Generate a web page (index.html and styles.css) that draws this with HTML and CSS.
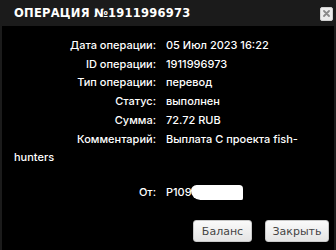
FILE: index.html
```html
<!DOCTYPE html>
<html>
<head>
<meta charset="utf-8">
<link rel="stylesheet" href="styles.css">
</head>
<body>
<div class="dialog">
  <div class="titlebar">
    <span class="title">ОПЕРАЦИЯ №1911996973</span>
    <button class="close" aria-label="close">
      <svg width="7" height="7" viewBox="0 0 7 7"><path d="M1 1L6 6M6 1L1 6" stroke="#8a8a8a" stroke-width="1.8" stroke-linecap="round"/></svg>
    </button>
  </div>
  <div class="content">
    <div class="info">
      <div class="row"><span class="label">Дата операции:</span>05 Июл 2023 16:22</div>
      <div class="row"><span class="label">ID операции:</span>1911996973</div>
      <div class="row"><span class="label">Тип операции:</span>перевод</div>
      <div class="row"><span class="label">Статус:</span>выполнен</div>
      <div class="row"><span class="label">Сумма:</span>72.72 RUB</div>
      <div class="row"><span class="label">Комментарий:</span>Выплата С проекта fish-hunters</div>
      <div class="row from"><span class="label">От:</span>P109<span class="redact"></span></div>
    </div>
    <div class="actions">
      <button class="btn btn-balance">Баланс</button>
      <button class="btn btn-close">Закрыть</button>
    </div>
  </div>
</div>
</body>
</html>
```
FILE: styles.css
```css
* { box-sizing: border-box; }
html, body { margin: 0; padding: 0; }
body { background: #1b1b1b; width: 336px; height: 250px; overflow: hidden; }
.dialog { width: 336px; height: 250px; display: flex; flex-direction: column; }
.titlebar {
  height: 26px; flex-shrink: 0; display: flex; align-items: center; justify-content: space-between;
  padding: 0 3px 0 14px;
}
.title {
  color: #fff; font-family: "DejaVu Sans", sans-serif; font-weight: bold;
  font-size: 11.5px; letter-spacing: 0.25px; margin-top: -1px;
}
.close {
  width: 13px; height: 14px; padding: 0; margin-top: 1px; border: 1px solid #d0d0d0;
  border-radius: 2px; background: #ececec; display: flex; align-items: center; justify-content: center;
}
.content {
  flex: 1; background: #000; margin: 0 2px; padding: 10px 0 8px 12px;
  display: flex; flex-direction: column;
}
.info { color: #fff; font-family: Inter, "Noto Sans", sans-serif; font-size: 11px; font-weight: 500; line-height: 18.7px; padding-right: 6px; }
.label { display: inline-block; width: 142px; text-align: right; margin-right: 10px; }
.from { margin-top: 16px; }
.redact {
  display: inline-block; width: 52px; height: 15px; background: #fff; vertical-align: -4px;
  margin-left: -1px; border-radius: 6px 4px 2px 10px;
}
.actions { display: flex; justify-content: flex-end; gap: 13px; padding-right: 5px; margin-top: auto; }
.btn {
  flex: 0 0 auto; height: 22px; padding: 0; border: 1px solid #c8c8c8; border-radius: 3px;
  background: linear-gradient(#fafafa, #e4e4e4); color: #444;
  font-family: "DejaVu Sans", Verdana, sans-serif; font-size: 11px;
}
.btn-balance { width: 59px; }
.btn-close { width: 64px; }
```
